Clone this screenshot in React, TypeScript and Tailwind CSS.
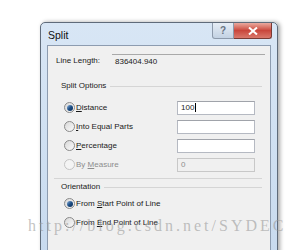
import React from 'react';

const Radio = ({ checked = false, disabled = false }: { checked?: boolean; disabled?: boolean }) => (
  <div
    className={`w-[11px] h-[11px] rounded-full border flex items-center justify-center shrink-0 ${
      disabled
        ? 'border-[#c4c4c4] bg-[#f4f4f4]'
        : 'border-[#8a8a8a] bg-gradient-to-br from-[#d8d8d8] to-[#fbfbfb]'
    }`}
  >
    {checked && (
      <div className="w-[6px] h-[6px] rounded-full bg-gradient-to-br from-[#8fb6e0] via-[#1d4f86] to-[#0c2c55]" />
    )}
  </div>
);

const OptionRow = ({
  label,
  checked,
  disabled,
  value,
  input,
}: {
  label: React.ReactNode;
  checked?: boolean;
  disabled?: boolean;
  value?: string;
  input?: boolean;
}) => (
  <div className="h-[19px] flex items-center">
    <div className="w-[22px] pl-[16px] flex items-center">
      <Radio checked={checked} disabled={disabled} />
    </div>
    <span className={`ml-[6px] ${disabled ? 'text-[#8d8d8d]' : 'text-[#1a1a1a]'}`}>{label}</span>
    {input && (
      <div
        className={`ml-auto mr-[15px] w-[78px] h-[14px] border flex items-center px-[3px] ${
          disabled
            ? 'bg-[#f0f0f0] border-[#c8c8c8] text-[#8d8d8d]'
            : 'bg-white border-[#b5b9c2] border-t-[#a0a3aa] text-[#1a1a1a]'
        }`}
      >
        {value}
        {value === '100' && <span className="w-px h-[9px] bg-black ml-px" />}
      </div>
    )}
  </div>
);

const GroupHeader = ({ title }: { title: string }) => (
  <div className="h-[12px] flex items-center pl-[13px] pr-[8px]">
    <span className="text-[#1a1a1a] mr-[4px]">{title}</span>
    <div className="flex-1 h-px bg-[#d5d5d5]" />
  </div>
);

const SplitDialog = () => {
  return (
    <div
      className="relative w-[300px] h-[250px] overflow-hidden bg-white pt-[22px] pl-[40px]"
      style={{ fontFamily: '"Liberation Sans", Arial, sans-serif' }}
    >
      <div className="w-[238px] h-[260px] rounded-t-[5px] border border-[#5f6b7a] bg-gradient-to-b from-[#d8e6f5] to-[#c6d9ee] shadow-[2px_0_4px_rgba(0,0,0,0.35)] flex flex-col">
        {/* title bar */}
        <div className="h-[22px] flex items-start relative">
          <span className="pl-[7px] pt-[5px] text-[10.5px] text-[#111]">Split</span>
          <div className="ml-auto mr-[5px] flex">
            <div className="w-[22px] h-[16px] rounded-bl-[3px] border border-t-0 border-[#8d9aab] bg-gradient-to-b from-[#e6edf5] to-[#c3d2e3] flex items-center justify-center text-[10px] font-bold text-[#6a7482] leading-none">
              ?
            </div>
            <div className="w-[38px] h-[16px] rounded-br-[3px] border border-t-0 border-l-0 border-[#7a3a34] bg-gradient-to-b from-[#e9a99f] via-[#c9463c] to-[#d9786c] flex items-center justify-center">
              <svg width="10" height="8" viewBox="0 0 10 8">
                <path d="M1 0.5 L9 7.5 M9 0.5 L1 7.5" stroke="white" strokeWidth="2" />
              </svg>
            </div>
          </div>
        </div>

        {/* client */}
        <div className="mx-[6px] flex-1 bg-[#f0f0f0] border border-[#8d9cb0] text-[8px] flex flex-col">
          <div className="mt-[8px] h-[14px] flex items-center">
            <span className="pl-[8px] w-[64px] text-[#1a1a1a]">Line Length:</span>
            <div className="w-[153px] h-[14px] border-t border-[#a9a9a9] flex items-center pl-[3px] text-[#1a1a1a]">
              836404.940
            </div>
          </div>

          <div className="mt-[12px]">
            <GroupHeader title="Split Options" />
          </div>
          <div className="mt-[6px]">
            <OptionRow checked input value="100" label={<><u>D</u>istance</>} />
            <OptionRow input value="" label={<><u>I</u>nto Equal Parts</>} />
            <OptionRow input value="" label={<><u>P</u>ercentage</>} />
            <OptionRow disabled input value="0" label={<>By <u>M</u>easure</>} />
          </div>
          <div className="mt-[4px] ml-[6px] mr-[8px] h-px bg-[#d5d5d5]" />

          <div className="mt-[2px]">
            <GroupHeader title="Orientation" />
          </div>
          <div className="mt-[1px]">
            <OptionRow checked label={<>From <u>S</u>tart Point of Line</>} />
            <OptionRow label={<>From <u>E</u>nd Point of Line</>} />
          </div>

          <div className="mt-[18px] flex pl-[105px] gap-[4px]">
            <div className="w-[54px] h-[22px] rounded-[3px] border border-[#3c7fb1] bg-gradient-to-b from-[#eaf6fd] to-[#d9f0fc]" />
            <div className="w-[52px] h-[22px] rounded-[3px] border border-[#707070] bg-gradient-to-b from-[#f2f2f2] to-[#dddddd]" />
          </div>
        </div>
      </div>

      {/* watermark */}
      <div
        className="absolute left-[28px] top-[214px] text-[16px] tracking-[3px] text-[#9a9a9a]/60 whitespace-nowrap pointer-events-none"
        style={{ fontFamily: '"Liberation Serif", "Times New Roman", serif' }}
      >
        http://blog.csdn.net/SYDEC
      </div>
    </div>
  );
};

export default SplitDialog;
